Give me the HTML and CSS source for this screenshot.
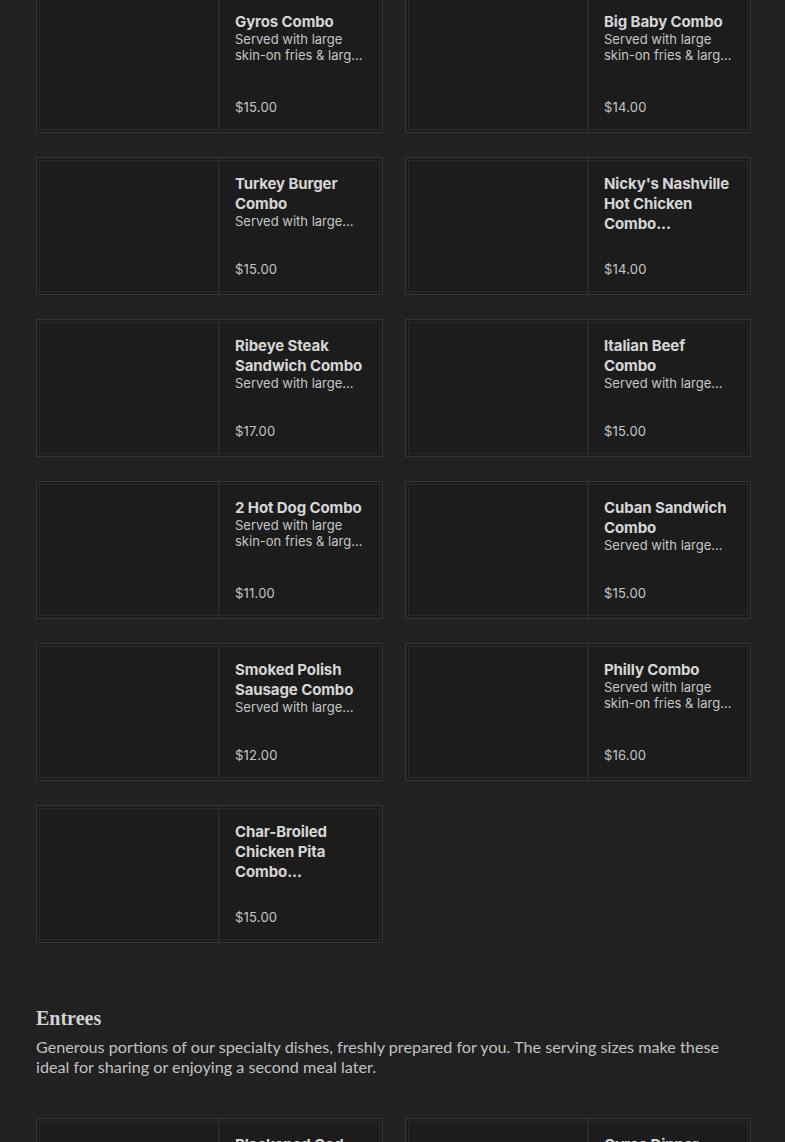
FILE: index.html
```html
<!DOCTYPE html>
<html lang="en">
<head>
<meta charset="utf-8">
<title>Menu</title>
<link rel="stylesheet" href="styles.css">
</head>
<body>
<main class="page">
  <section class="grid grid-top">
    <div class="card"><div class="pic"></div><div class="info"><div class="name">Gyros Combo</div><div class="desc l2">Served with large skin-on fries &amp; large drink.</div><div class="price">$15.00</div></div></div>
    <div class="card"><div class="pic"></div><div class="info"><div class="name">Big Baby Combo</div><div class="desc l2">Served with large skin-on fries &amp; large drink.</div><div class="price">$14.00</div></div></div>
    <div class="card"><div class="pic"></div><div class="info"><div class="name">Turkey Burger Combo</div><div class="desc l1">Served with large skin-on fries &amp; large drink.</div><div class="price">$15.00</div></div></div>
    <div class="card"><div class="pic"></div><div class="info"><div class="name n3">Nicky's Nashville Hot Chicken Combo...</div><div class="price">$14.00</div></div></div>
    <div class="card"><div class="pic"></div><div class="info"><div class="name">Ribeye Steak Sandwich Combo</div><div class="desc l1">Served with large skin-on fries &amp; large drink.</div><div class="price">$17.00</div></div></div>
    <div class="card"><div class="pic"></div><div class="info"><div class="name">Italian Beef Combo</div><div class="desc l1">Served with large skin-on fries &amp; large drink.</div><div class="price">$15.00</div></div></div>
    <div class="card"><div class="pic"></div><div class="info"><div class="name">2 Hot Dog Combo</div><div class="desc l2">Served with large skin-on fries &amp; large drink.</div><div class="price">$11.00</div></div></div>
    <div class="card"><div class="pic"></div><div class="info"><div class="name">Cuban Sandwich Combo</div><div class="desc l1">Served with large skin-on fries &amp; large drink.</div><div class="price">$15.00</div></div></div>
    <div class="card"><div class="pic"></div><div class="info"><div class="name">Smoked Polish Sausage Combo</div><div class="desc l1">Served with large skin-on fries &amp; large drink.</div><div class="price">$12.00</div></div></div>
    <div class="card"><div class="pic"></div><div class="info"><div class="name">Philly Combo</div><div class="desc l2">Served with large skin-on fries &amp; large drink.</div><div class="price">$16.00</div></div></div>
    <div class="card"><div class="pic"></div><div class="info"><div class="name n3">Char-Broiled Chicken Pita Combo...</div><div class="price">$15.00</div></div></div>
  </section>

  <section class="category">
    <h2 class="cat-title">Entrees</h2>
    <p class="cat-desc">Generous portions of our specialty dishes, freshly prepared for you. The serving sizes make these ideal for sharing or enjoying a second meal later.</p>
  </section>

  <section class="grid">
    <div class="card"><div class="pic"></div><div class="info"><div class="name">Blackened Cod Fish</div><div class="desc l1">Served with rice and vegetables.</div><div class="price">$18.00</div></div></div>
    <div class="card"><div class="pic"></div><div class="info"><div class="name">Gyros Dinner</div><div class="desc l2">Served with rice and salad.</div><div class="price">$16.00</div></div></div>
  </section>
</main>
</body>
</html>
```

FILE: styles.css
```css
* { box-sizing: border-box; }
html, body { margin: 0; padding: 0; }
body {
  background: #212121;
  color: #c9c9c9;
  font-family: Inter, "Noto Sans", "Liberation Sans", sans-serif;
  overflow: hidden;
}
.page {
  width: 785px;
  padding: 0 34px 0 36px;
}
.grid {
  display: grid;
  grid-template-columns: 347px 346px;
  column-gap: 22px;
  row-gap: 24px;
}
.grid-top { margin-top: -5px; }
.card {
  height: 138px;
  display: grid;
  grid-template-columns: 182px 1fr;
  background: #1c1c1c;
  border: 1px solid #363636;
  box-shadow: inset 0 0 0 2px #1c1c1c, inset 0 0 0 3px #2a2a2a;
}
.pic {
  border-right: 1px solid #303030;
  box-shadow: 1px 0 0 #232323;
}
.info {
  padding: 16px 14px 17px 16px;
  display: flex;
  flex-direction: column;
  min-width: 0;
}
.name {
  font-size: 15px;
  line-height: 20px;
  font-weight: 700;
  color: #d6d6d6;
  display: -webkit-box;
  -webkit-box-orient: vertical;
  -webkit-line-clamp: 2;
  overflow: hidden;
  letter-spacing: -0.1px;
}
.name.n3 { -webkit-line-clamp: 3; }
.desc {
  margin-top: -1px;
  font-size: 13px;
  line-height: 16px;
  color: #c6c6c6;
  display: -webkit-box;
  -webkit-box-orient: vertical;
  overflow: hidden;
}
.desc.l1 { -webkit-line-clamp: 1; }
.desc.l2 { -webkit-line-clamp: 2; }
.price {
  margin-top: auto;
  font-size: 13px;
  line-height: 16px;
  color: #c6c6c6;
  letter-spacing: 0.2px;
}
.category {
  padding: 62px 0 41px;
}
.cat-title {
  margin: 0 0 6px;
  font-family: "Liberation Serif", "DejaVu Serif", serif;
  font-size: 20px;
  line-height: 26px;
  font-weight: 700;
  color: #d2d2d2;
}
.cat-desc {
  margin: 0;
  font-family: Lato, "Liberation Sans", sans-serif;
  font-size: 16.2px;
  line-height: 20px;
  color: #c2c2c2;
  max-width: 700px;
}
```
